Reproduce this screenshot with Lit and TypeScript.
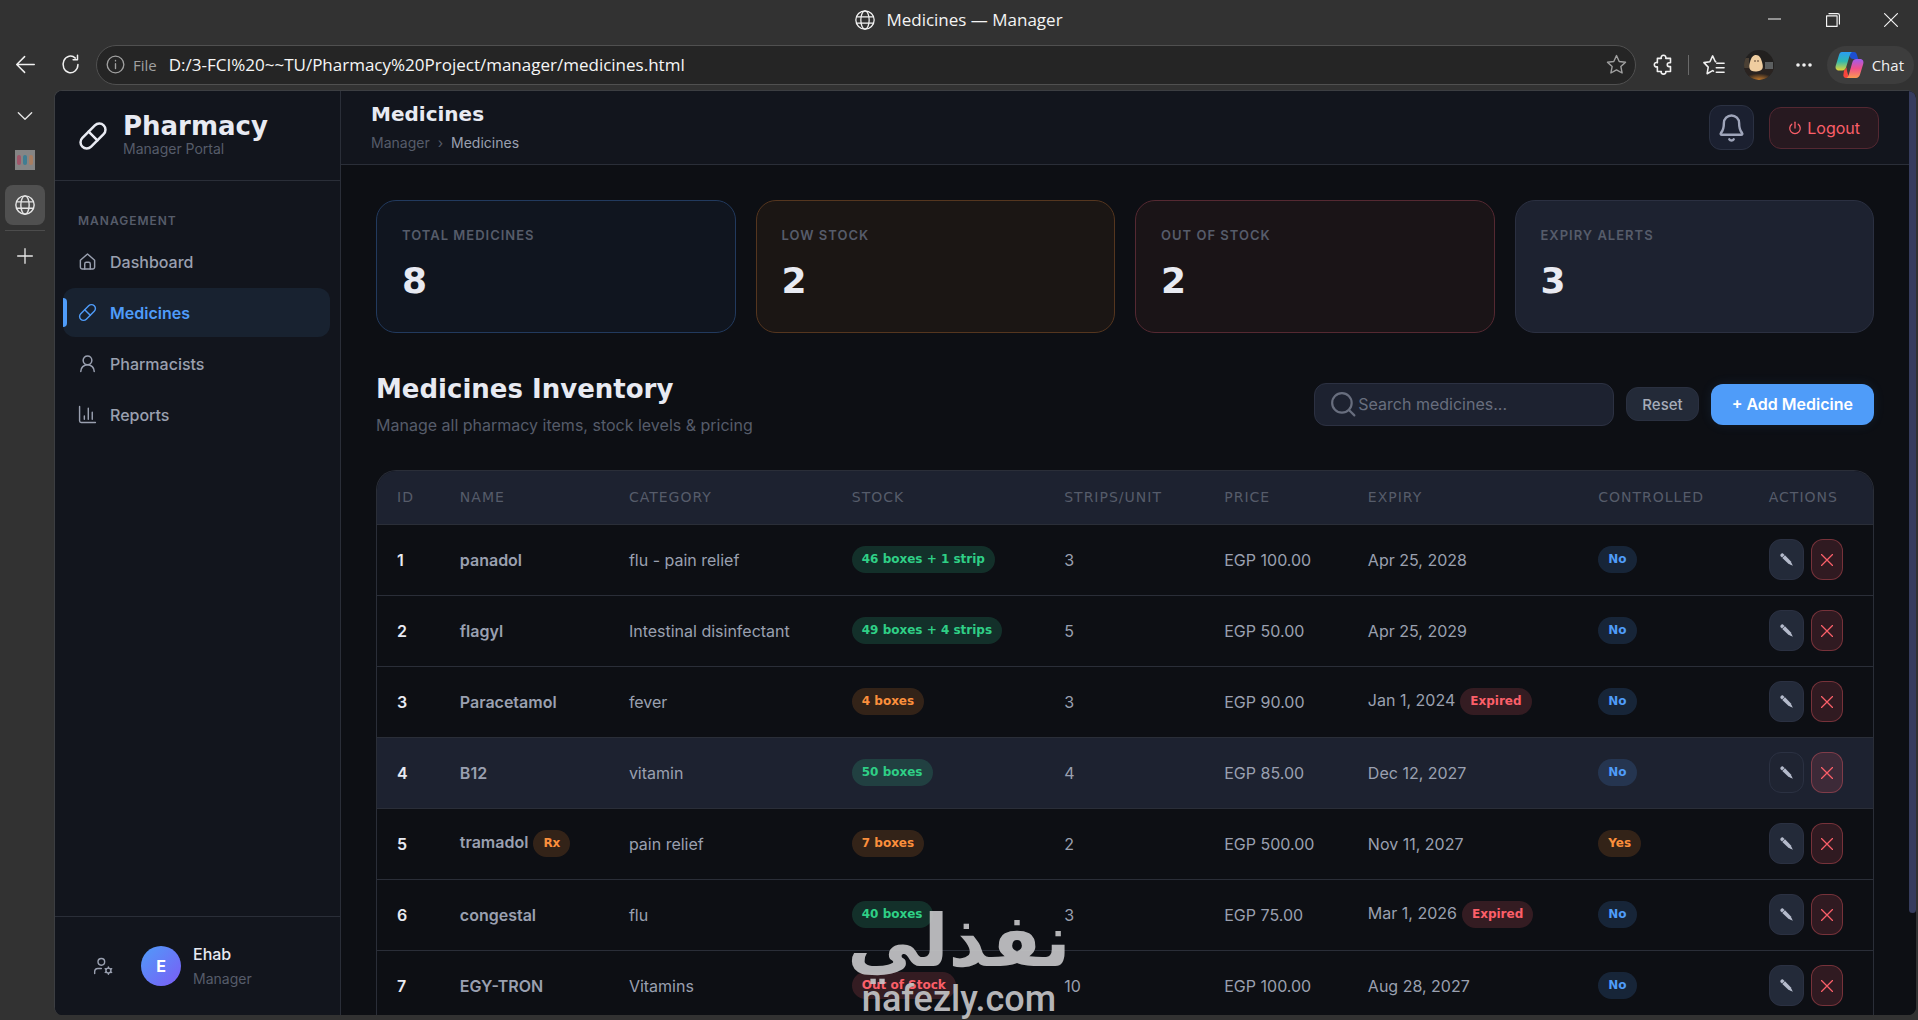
import { LitElement, html, svg, css } from "lit";
import { customElement, state } from "lit/decorators.js";
import { classMap } from "lit/directives/class-map.js";

type Tone = "ok" | "warn" | "danger" | "info";

interface Medicine {
  id: number;
  name: string;
  rx?: boolean;
  category: string;
  stock: string;
  tone: Tone;
  strips: number;
  price: string;
  expiry: string;
  expired?: boolean;
  controlled: boolean;
}

const MEDICINES: Medicine[] = [
  { id: 1, name: "panadol", category: "flu - pain relief", stock: "46 boxes + 1 strip", tone: "ok", strips: 3, price: "EGP 100.00", expiry: "Apr 25, 2028", controlled: false },
  { id: 2, name: "flagyl", category: "Intestinal disinfectant", stock: "49 boxes + 4 strips", tone: "ok", strips: 5, price: "EGP 50.00", expiry: "Apr 25, 2029", controlled: false },
  { id: 3, name: "Paracetamol", category: "fever", stock: "4 boxes", tone: "warn", strips: 3, price: "EGP 90.00", expiry: "Jan 1, 2024", expired: true, controlled: false },
  { id: 4, name: "B12", category: "vitamin", stock: "50 boxes", tone: "ok", strips: 4, price: "EGP 85.00", expiry: "Dec 12, 2027", controlled: false },
  { id: 5, name: "tramadol", rx: true, category: "pain relief", stock: "7 boxes", tone: "warn", strips: 2, price: "EGP 500.00", expiry: "Nov 11, 2027", controlled: true },
  { id: 6, name: "congestal", category: "flu", stock: "40 boxes", tone: "ok", strips: 3, price: "EGP 75.00", expiry: "Mar 1, 2026", expired: true, controlled: false },
  { id: 7, name: "EGY-TRON", category: "Vitamins", stock: "Out of Stock", tone: "danger", strips: 10, price: "EGP 100.00", expiry: "Aug 28, 2027", controlled: false },
];

const STATS = [
  { label: "Total Medicines", value: 8, kind: "blue" },
  { label: "Low Stock", value: 2, kind: "amber" },
  { label: "Out of Stock", value: 2, kind: "red" },
  { label: "Expiry Alerts", value: 3, kind: "plain" },
];

const COLUMNS = ["ID", "Name", "Category", "Stock", "Strips/Unit", "Price", "Expiry", "Controlled", "Actions"];

const icon = (size: number, body: unknown, width = 2, box = 24) => html`<svg
  width=${size} height=${size} viewBox="0 0 ${box} ${box}" fill="none" stroke="currentColor"
  stroke-width=${width} stroke-linecap="round" stroke-linejoin="round" aria-hidden="true">${body}</svg>`;

const PILL = svg`<path d="m10.5 20.5 10-10a4.95 4.95 0 1 0-7-7l-10 10a4.95 4.95 0 1 0 7 7Z"/><path d="m8.5 8.5 7 7"/>`;
const HOME = svg`<path d="M3 10.5 12 2.5l9 8V19a2.5 2.5 0 0 1-2.5 2.5h-13A2.5 2.5 0 0 1 3 19Z"/><path d="M8.5 21.5V15a2 2 0 0 1 2-2h3a2 2 0 0 1 2 2v6.500"/>`;
const PERSON = svg`<circle cx="12" cy="8" r="5.500"/><path d="M3.500 22c0-4.700 3.800-8.500 8.500-8.500s8.500 3.800 8.500 8.500"/>`;
const CHART = svg`<path d="M2 2v18a2 2 0 0 0 2 2h18"/><path d="M8 18v-4M13 18V4M18 18V9"/>`;
const GLOBE = svg`<circle cx="12" cy="12" r="11"/><ellipse cx="12" cy="12" rx="5" ry="11"/><path d="M2 8.200h20M2 15.800h20"/>`;
const USER_GEAR = svg`<circle cx="10" cy="7" r="4"/><path d="M2 21v-2a4 4 0 0 1 4-4h4"/><circle cx="18.500" cy="17.500" r="3"/><path d="M18.500 13v1.500M18.500 20.500V22M14.600 15.200l1.300.800M21.100 19l1.300.800M14.600 19.800l1.300-.800M21.100 16l1.300-.800"/>`;
const BELL = svg`<path d="M3.300 16.500c-.6.700-.2 1.500.7 1.500h16c.9 0 1.300-.8.7-1.500C19.400 15.100 18.300 13.500 18.300 8.300a6.300 6.300 0 0 0-12.600 0c0 5.200-1.100 6.800-2.400 8.200Z"/><path d="M10.200 21.800a2.100 2.100 0 0 0 3.600 0"/>`;
const POWER = svg`<path d="M12 2v10"/><path d="M17.500 5.500a9 9 0 1 1-11 0"/>`;
const SEARCH = svg`<circle cx="11" cy="11" r="9"/><path d="m18 18 4.500 4.500"/>`;
const BACK = svg`<path d="M22 12H2.500M11 3l-9 9 9 9"/>`;
const RELOAD = svg`<path d="M20.500 12a8.500 9.500 0 1 1-3-7.300"/><path d="M20 1.500v5h-5"/>`;
const INFO = svg`<circle cx="12" cy="12" r="10.500"/><path d="M12 11v6M12 7v.500"/>`;
const STAR = svg`<path d="m12 1.800 3.100 6.700 7.200.9-5.300 5 1.400 7.300-6.400-3.600-6.400 3.600L7 14.400l-5.300-5 7.200-.9Z"/>`;
const PUZZLE = svg`<path d="M5 5h4.500c-.8-2 .6-3.500 2.500-3.500S15.300 3 14.500 5H20v5h-1.500a2.200 2.200 0 0 0 0 4.400H20V20h-5.500c.8 1.800-.8 3-2.500 3s-3.300-1.200-2.500-3H5v-5.500c-2 .8-3.500-.6-3.500-2.300S3 9.200 5 10Z"/>`;
const COLLECTIONS = svg`<path d="M14 8.500h-.5L10.500 2l-3 6.500-6.500.9 4.700 4.900L4.500 21.500l6-3.400 1 .6"/><path d="M15 10h8M14.500 15h8.500M14.500 20h8.500"/>`;

@customElement("app-root")
export class AppRoot extends LitElement {
  @state() private query = "";
  @state() private highlighted = 4;

  static styles = css`
    :host {
      --chrome: #323232;
      --bg: #0d0f14;
      --panel: #12151d;
      --raised: #1d2230;
      --line: #2a2e38;
      --text: #e8eaf2;
      --soft: #9aa0b0;
      --muted: #565c6a;
      --accent: #4f9cf9;
      --danger: #fb5f69;
      --body: "Inter", "Open Sans", sans-serif;
      --wide: "DejaVu Sans", sans-serif;
      --system: "Open Sans", "Noto Sans", sans-serif;
      display: block;
      height: 100vh;
      background: var(--chrome);
      color: var(--text);
      font-family: var(--body);
      font-size: 16px;
      overflow: hidden;
      position: relative;
    }
    *, *::before { box-sizing: border-box; }
    button { font: inherit; color: inherit; background: none; border: 0; padding: 0; margin: 0; cursor: pointer; }
    a { color: inherit; text-decoration: none; }
    h1, h2, p, dl, dt, dd { margin: 0; }
    svg { display: block; flex: none; }

    .window { height: 100%; display: flex; flex-direction: column; }

    .titlebar { display: grid; grid-template-columns: 1fr auto 1fr; align-items: center; height: 39px; flex: none; font-family: var(--system); font-size: 17px; color: #f4f4f4; }
    .titlebar .caption { grid-column: 2; display: flex; align-items: center; gap: 11px; }
    .controls { display: flex; justify-content: flex-end; }
    .controls button { width: 58px; height: 39px; padding-left: 3px; display: grid; place-items: center; }

    .toolbar { display: flex; align-items: center; height: 51px; flex: none; padding: 0 4px 0 3px; font-family: var(--system); color: #f0f0f0; }
    .tool { height: 36px; width: 45px; display: grid; place-items: center; }
    .address { flex: 1; min-width: 0; height: 40px; margin: 0 5px 0 3px; padding: 0 8px 0 9px; display: flex; align-items: center; gap: 8px; border: 1px solid #505050; border-radius: 20px; background: #252525; color: #a0a0a0; font-size: 15px; }
    .address input { flex: 1; min-width: 0; background: none; border: 0; outline: 0; padding: 0; margin-left: 4px; font-family: var(--system); font-size: 17px; color: #f6f6f6; }
    .extras { display: flex; align-items: center; }
    .divider { width: 1px; height: 20px; margin: 0 3px 0 2px; background: #6a6a6a; }
    .chat { display: flex; align-items: center; gap: 8px; height: 38px; padding: 0 10px 0 8px; border-radius: 19px; background: #3d3d3d; font-size: 15px; }

    .body { flex: 1; min-height: 0; display: flex; padding-bottom: 5px; }
    .tabs { width: 54px; flex: none; display: flex; flex-direction: column; align-items: center; padding: 7px 4px 0 0; color: #e6e6e6; }
    .tabs button { width: 40px; height: 38px; display: grid; place-items: center; border-radius: 8px; }
    .tabs .favicon { height: 50px; }
    .tabs .current { height: 40px; background: #505050; }
    .tabs hr { width: 40px; border: 0; border-top: 1px solid #4c4c4c; margin: 5px 0 6px; }

    .page { flex: 1; min-width: 0; display: flex; background: var(--bg); border: solid #3c3e42; border-width: 1px 0 0 1px; border-radius: 8px; overflow: hidden; margin-right: 2px; }

    .sidebar { width: 286px; flex: none; display: flex; flex-direction: column; background: var(--panel); border-right: 1px solid var(--line); }
    .brand { height: 90px; flex: none; display: flex; align-items: center; gap: 15px; padding: 0 23px; border-bottom: 1px solid var(--line); }
    .brand-name { font-family: var(--wide); font-weight: 700; font-size: 26px; line-height: 26px; }
    .small { font-size: 14px; line-height: 20px; color: var(--muted); }
    .nav { flex: 1; padding: 30px 10px 0 8px; display: flex; flex-direction: column; gap: 2px; }
    .eyebrow { font-size: 13px; line-height: 20px; font-weight: 600; letter-spacing: 1px; text-transform: uppercase; color: var(--muted); }
    .nav .eyebrow { padding: 0 15px 4px; font-size: 12px; }
    .nav a { position: relative; display: flex; align-items: center; gap: 13px; height: 49px; padding: 0 15px; border-radius: 12px; color: var(--soft); font-weight: 500; }
    .nav a.active { background: #182230; color: var(--accent); font-weight: 600; }
    .nav a.active::before { content: ""; position: absolute; left: 0; top: 10px; bottom: 10px; width: 4px; border-radius: 0 4px 4px 0; background: var(--accent); }
    .profile { height: 99px; flex: none; display: flex; align-items: center; border-top: 1px solid var(--line); padding: 0 38px; color: var(--soft); }
    .avatar { width: 40px; height: 40px; flex: none; margin: 0 12px 0 28px; border-radius: 50%; display: grid; place-items: center; background: linear-gradient(135deg, #4f9cf9, #7b5cf5); color: #fff; font-weight: 700; }
    .who { line-height: 25px; font-weight: 500; color: var(--text); }
    .who .small { line-height: 24px; font-weight: 400; }

    .main { flex: 1; min-width: 0; display: flex; flex-direction: column; overflow: hidden; }
    .header { height: 74px; flex: none; display: flex; align-items: center; gap: 15px; padding: 0 30px; background: var(--panel); border-bottom: 1px solid var(--line); }
    .header-text { flex: 1; padding-top: 2px; }
    .header h1 { font-family: var(--wide); font-size: 20px; line-height: 28px; font-weight: 700; }
    .crumbs { display: flex; gap: 8px; font-size: 14px; line-height: 30px; color: var(--muted); }
    .crumbs span { color: var(--soft); }
    .bell { width: 45px; height: 45px; border-radius: 12px; border: 1px solid #2b3142; background: #1b2030; color: #9fa5ba; display: grid; place-items: center; }
    .logout { height: 42px; display: flex; align-items: center; gap: 5px; padding: 0 18px; border-radius: 12px; border: 1px solid #542832; background: #271920; color: var(--danger); }

    .content { flex: 1; min-height: 0; padding: 35px 35px 0; overflow: hidden; }
    .stats { display: grid; grid-template-columns: repeat(4, 1fr); gap: 20px; }
    .stat { height: 133px; padding: 24px 25px; border: 1px solid; border-radius: 20px; }
    .stat dd { font-family: var(--wide); font-weight: 700; font-size: 36px; line-height: 40px; margin-top: 16px; }
    .blue { background: #10151f; border-color: #223a5e; }
    .amber { background: #1b1614; border-color: #55361f; }
    .red { background: #1a1417; border-color: #552932; }
    .plain { background: var(--raised); border-color: #2b3041; }

    .section-head { display: flex; align-items: center; gap: 12px; padding: 35px 0 30px; }
    .section-text { flex: 1; }
    .section-text h2 { font-family: var(--wide); font-weight: 700; font-size: 26px; line-height: 42px; }
    .section-text p { line-height: 30px; color: var(--muted); }
    .search { width: 300px; height: 43px; display: flex; align-items: center; gap: 2px; padding: 0 15px; border: 1px solid #2c3142; border-radius: 12px; background: var(--raised); color: #686e7e; }
    .search input { flex: 1; min-width: 0; background: none; border: 0; outline: 0; padding: 0; font: inherit; color: var(--text); }
    .search input::placeholder { color: #686e7e; opacity: 1; }
    .reset { height: 34px; padding: 0 15px; border-radius: 12px; background: #232a38; color: #a6acba; font-size: 15px; font-weight: 500; border: 1px solid #2a3040; }
    .add { height: 41px; padding: 0 21px; border-radius: 12px; background: var(--accent); color: #fff; font-weight: 600; box-shadow: 0 0 12px #4f9cf91a; }

    .table-wrap { border: solid var(--line); border-width: 1px 1px 0; border-radius: 20px 20px 0 0; overflow: hidden; }
    table { width: 100%; table-layout: fixed; border-collapse: collapse; }
    th, td { padding: 0 0 0 20px; text-align: left; white-space: nowrap; border-bottom: 1px solid var(--line); }
    th { height: 53px; background: var(--raised); font-family: var(--wide); font-size: 14px; font-weight: 400; letter-spacing: 1px; text-transform: uppercase; color: var(--muted); }
    td { height: 71px; color: var(--soft); }
    tbody tr.lit { background: var(--raised); }
    .col-1 { width: 4.2%; }
    .col-2 { width: 11.3%; }
    .col-3 { width: 14.9%; }
    .col-4 { width: 14.2%; }
    .col-5 { width: 10.7%; }
    .col-6 { width: 9.6%; }
    .col-7 { width: 15.4%; }
    .col-8 { width: 11.4%; }
    .col-9 { width: 8.3%; }
    .id { color: var(--text); font-weight: 600; }
    .name { font-weight: 600; }
    .badge { display: inline-block; padding: 0 10px; border-radius: 14px; font-family: var(--wide); font-weight: 700; font-size: 12px; line-height: 27px; vertical-align: middle; }
    .gap { margin-left: 5px; }
    .ok { background: #34d3992b; color: #2fcf86; }
    .warn { background: #ff923329; color: #fb8f3c; }
    .danger { background: #fb5f692b; color: var(--danger); }
    .info { background: #4f9cf929; color: var(--accent); }
    .actions { display: flex; gap: 7px; }
    .actions button { height: 41px; display: grid; place-items: center; border-radius: 12px; border: 1px solid #2b3142; }
    .actions .edit { width: 35px; background: #232a39; color: #b4bacb; }
    .lit .actions .edit { background: #1f2432; }
    .delete { width: 32px; background: #fb5f6926; color: var(--danger); }
    .actions .delete { border-color: #fb5f6959; }

    .scrollbar { width: 7px; flex: none; background: #0d0f14; }
    .thumb { height: 89%; background: #363c5e; border-radius: 0 0 4px 4px; }

    .stamp { position: absolute; left: 50%; bottom: 0; transform: translateX(-50%); text-align: center; color: #c4c4c6; opacity: 0.92; pointer-events: none; white-space: nowrap; }
    .stamp-ar { font-family: "DejaVu Sans", sans-serif; font-weight: 700; font-size: 73px; line-height: 75px; }
    .stamp-en { font-family: "Roboto", sans-serif; font-weight: 500; font-size: 36px; line-height: 42px; }
  `;

  private renderChrome() {
    return html`
      <div class="titlebar">
        <div class="caption">${icon(20, GLOBE, 1.5)}<span>Medicines — Manager</span></div>
        <div class="controls">
          <button aria-label="Minimize">${icon(13, svg`<path d="M0 11h24"/>`, 2)}</button>
          <button aria-label="Restore">${icon(14, svg`<path d="M1 5h18v18H1ZM5 1h15a3 3 0 0 1 3 3v15"/>`, 2)}</button>
          <button aria-label="Close">${icon(14, svg`<path d="m1 1 22 22M23 1 1 23"/>`, 2)}</button>
        </div>
      </div>
      <div class="toolbar">
        <button class="tool" aria-label="Back">${icon(21, BACK, 1.7)}</button>
        <button class="tool" aria-label="Reload">${icon(21, RELOAD, 1.7)}</button>
        <div class="address">
          ${icon(19, INFO, 1.7)}
          <label for="url">File</label>
          <input id="url" type="text" .value=${"D:/3-FCI%20~~TU/Pharmacy%20Project/manager/medicines.html"} />
          ${icon(21, STAR, 1.6)}
        </div>
        <div class="extras">
          <button class="tool" aria-label="Extensions">${icon(21, PUZZLE, 1.8)}</button>
          <span class="divider"></span>
          <button class="tool" aria-label="Favorites">${icon(22, COLLECTIONS, 1.7)}</button>
          <button class="tool" aria-label="Profile">
            <svg width="30" height="30" viewBox="0 0 30 30" aria-hidden="true">
              <defs>
                <clipPath id="round"><circle cx="15" cy="15" r="15" /></clipPath>
                <radialGradient id="glow" cx="0.5" cy="1" r="0.5"><stop offset="0" stop-color="#c47a2c" /><stop offset="1" stop-color="#2a2320" /></radialGradient>
              </defs>
              <g clip-path="url(#round)">
                <rect width="30" height="30" fill="#22201f" />
                <rect y="17" width="30" height="13" fill="url(#glow)" />
                <path d="M21 12h8v7h-8Z" fill="#5c5f60" />
                <path d="M0 8h5v10H0Z" fill="#4b4034" />
                <path d="M12 5c3.500 0 5 3.500 6 7s2.500 9-5.500 9.500S4.500 17 6 12s3-7 6-7Z" fill="#efcda0" />
                <circle cx="11" cy="11" r="0.800" fill="#4a3423" /><circle cx="14" cy="11" r="0.800" fill="#4a3423" />
              </g>
            </svg>
          </button>
          <button class="tool" aria-label="More">
            <svg width="18" height="6" viewBox="0 0 18 6" fill="currentColor" aria-hidden="true"><circle cx="3" cy="3" r="1.800" /><circle cx="9" cy="3" r="1.800" /><circle cx="15" cy="3" r="1.800" /></svg>
          </button>
          <button class="chat">
            <svg width="29" height="28" viewBox="0 0 29 28" aria-hidden="true">
              <defs>
                <linearGradient id="cool" x1="0" y1="0" x2="0" y2="1"><stop offset="0" stop-color="#2a9df4" /><stop offset="0.5" stop-color="#2fb8b0" /><stop offset="1" stop-color="#e3d438" /></linearGradient>
                <linearGradient id="warm" x1="0" y1="0" x2="0" y2="1"><stop offset="0" stop-color="#a05cf0" /><stop offset="0.5" stop-color="#f0508c" /><stop offset="1" stop-color="#fb9a50" /></linearGradient>
              </defs>
              <path d="M14 1h5c2 0 2.500 1.500 3 3l1.200 4h-5c-2 0-3-1-3.600-3Z" fill="#1d4fd0" />
              <path d="M7 1h10c-1.500 1-2 2.500-2.500 4l-3.300 11c-.7 2-1.700 3.500-4 3.500H4C1 19.500 0 17 .8 14.500L4 4C4.600 2 5.500 1 7 1Z" fill="url(#cool)" />
              <path d="M9 19.500c1.500-1 2-2 2.400-3.500L12 20l2 7h-3c-1.700 0-2.300-1-2.700-2.500Z" fill="#f7453c" />
              <path d="M21.500 8H25c3 0 4 2.500 3.200 5L25 23.500c-.7 2.300-2 3.500-4 3.500H11.500c1.500-1 2-2.500 2.500-4l3.300-11.500C18 9.500 19 8 21.500 8Z" fill="url(#warm)" />
            </svg>
            <span>Chat</span>
          </button>
        </div>
      </div>`;
  }

  private renderSidebar() {
    return html`
      <aside class="sidebar">
        <div class="brand">
          ${icon(30, PILL, 2)}
          <div><div class="brand-name">Pharmacy</div><div class="small">Manager Portal</div></div>
        </div>
        <nav class="nav">
          <div class="eyebrow">Management</div>
          <a href="#dashboard">${icon(19, HOME, 1.8)}<span>Dashboard</span></a>
          <a href="#medicines" class="active" aria-current="page">${icon(19, PILL, 1.8)}<span>Medicines</span></a>
          <a href="#pharmacists">${icon(19, PERSON, 1.9)}<span>Pharmacists</span></a>
          <a href="#reports">${icon(19, CHART, 1.8)}<span>Reports</span></a>
        </nav>
        <div class="profile">
          <button aria-label="Account settings">${icon(20, USER_GEAR, 1.7)}</button>
          <div class="avatar">E</div>
          <div class="who">Ehab<div class="small">Manager</div></div>
        </div>
      </aside>`;
  }

  private renderRow(m: Medicine) {
    return html`
      <tr class=${classMap({ lit: m.id === this.highlighted })} @mouseenter=${() => (this.highlighted = m.id)}>
        <td class="id">${m.id}</td>
        <td><span class="name">${m.name}</span>${m.rx ? html`<span class="badge warn gap">Rx</span>` : ""}</td>
        <td>${m.category}</td>
        <td><span class="badge ${m.tone}">${m.stock}</span></td>
        <td>${m.strips}</td>
        <td>${m.price}</td>
        <td>${m.expiry}${m.expired ? html`<span class="badge danger gap">Expired</span>` : ""}</td>
        <td><span class="badge ${m.controlled ? "warn" : "info"}">${m.controlled ? "Yes" : "No"}</span></td>
        <td>
          <div class="actions">
            <button class="edit" aria-label="Edit ${m.name}">
              <svg width="13" height="13" viewBox="0 0 13 13" fill="currentColor" aria-hidden="true">
                <path d="M.4 3C0 1.500 1.500 0 3 .4L4.600 2 2 4.600Z" /><path d="M2.300 5 5 2.200l6 6.300.3 2.700-2.600-.2Z" /><path d="m11.200 9.600 1.700 3.200-3.400-1.600Z" />
              </svg>
            </button>
            <button class="delete" aria-label="Delete ${m.name}">${icon(12, svg`<path d="m1 1 22 22M23 1 1 23"/>`, 2.5)}</button>
          </div>
        </td>
      </tr>`;
  }

  render() {
    const rows = MEDICINES.filter((m) => m.name.toLowerCase().includes(this.query.toLowerCase()));
    return html`
      <div class="window">
        ${this.renderChrome()}
        <div class="body">
          <div class="tabs">
            <button aria-label="Tab menu">${icon(16, svg`<path d="m2 7 10 10L22 7"/>`, 2)}</button>
            <button class="favicon" aria-label="Pinned tab">
              <svg width="20" height="20" viewBox="0 0 20 20" aria-hidden="true">
                <rect width="20" height="20" fill="#858585" />
                <rect x="2" y="5" width="4" height="10" rx="2" fill="#a0566a" /><rect x="8" y="5" width="4" height="10" rx="2" fill="#3f7d92" /><rect x="14" y="5" width="4" height="10" rx="2" fill="#a87e62" />
              </svg>
            </button>
            <button class="current" aria-label="Current tab">${icon(20, GLOBE, 1.7)}</button>
            <hr />
            <button aria-label="New tab">${icon(16, svg`<path d="M12 1v22M1 12h22"/>`, 2)}</button>
          </div>
          <div class="page">
            ${this.renderSidebar()}
            <main class="main">
              <header class="header">
                <div class="header-text">
                  <h1>Medicines</h1>
                  <div class="crumbs"><a href="#manager">Manager</a>›<span>Medicines</span></div>
                </div>
                <button class="bell" aria-label="Notifications">${icon(29, BELL, 2)}</button>
                <button class="logout">${icon(14, POWER, 2.2)}<span>Logout</span></button>
              </header>
              <div class="content">
                <div class="stats">
                  ${STATS.map((s) => html`<dl class="stat ${s.kind}"><dt class="eyebrow">${s.label}</dt><dd>${s.value}</dd></dl>`)}
                </div>
                <div class="section-head">
                  <div class="section-text">
                    <h2>Medicines Inventory</h2>
                    <p>Manage all pharmacy items, stock levels &amp; pricing</p>
                  </div>
                  <label class="search">
                    ${icon(26, SEARCH, 2)}
                    <input type="text" aria-label="Search medicines" placeholder="Search medicines..." .value=${this.query}
                      @input=${(e: Event) => (this.query = (e.target as HTMLInputElement).value)} />
                  </label>
                  <button class="reset" @click=${() => (this.query = "")}>Reset</button>
                  <button class="add">+ Add Medicine</button>
                </div>
                <div class="table-wrap">
                  <table>
                    <thead><tr>${COLUMNS.map((c, i) => html`<th class="col-${i + 1}" scope="col">${c}</th>`)}</tr></thead>
                    <tbody>${rows.map((m) => this.renderRow(m))}</tbody>
                  </table>
                </div>
              </div>
            </main>
            <div class="scrollbar"><div class="thumb"></div></div>
          </div>
        </div>
      </div>
      <div class="stamp"><div class="stamp-ar" lang="ar" dir="rtl">نفذلي</div><div class="stamp-en">nafezly.com</div></div>`;
  }
}
